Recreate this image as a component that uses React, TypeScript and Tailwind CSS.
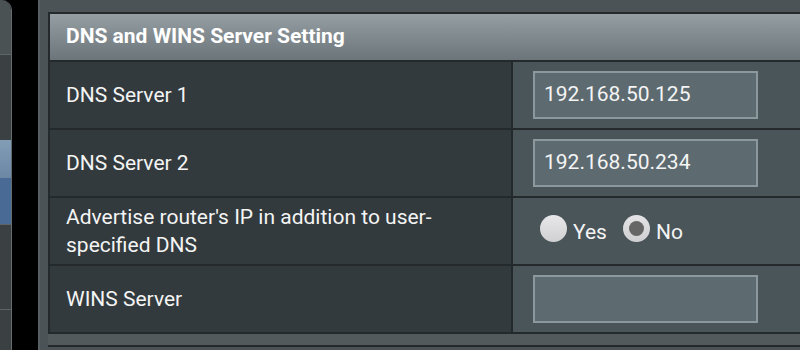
import React from "react";

const font = { fontFamily: "Roboto, 'Liberation Sans', sans-serif" };

function Row({ label, children }: { label: React.ReactNode; children: React.ReactNode }) {
  return (
    <div className="flex h-[68px] border-b-2 border-[#24292b]">
      <div className="w-[463px] bg-[#323a3d] border-r-2 border-[#24292b] flex items-center pl-[16px] text-[21px] leading-[28px] text-[#f4f4f4]">
        {label}
      </div>
      <div className="flex-1 bg-[#4a555a] flex items-center pl-[20px]">{children}</div>
    </div>
  );
}

function Input({ value }: { value: string }) {
  return (
    <div className="w-[225px] h-[48px] bg-[#5d6b71] border-2 border-[#8b999e] flex items-center pl-[9px] text-[21px] text-[#f4f4f4]">
      {value}
    </div>
  );
}

export default function App() {
  return (
    <div className="w-[800px] h-[350px] bg-black flex overflow-hidden" style={font}>
      <div className="w-[12px] h-full flex flex-col rounded-tr-[10px] overflow-hidden border-r border-[#656c6e]">
        <div className="h-[55px] bg-[#4b5254] border-b border-[#5e6567]" />
        <div className="h-[85px] bg-[#3b4042]" />
        <div className="h-[38px] bg-gradient-to-b from-[#829db6] to-[#6b87a4]" />
        <div className="h-[47px] bg-[#4a6a96] border-b border-[#5e6567]" />
        <div className="h-[85px] bg-[#3b4042] border-b border-[#5e6567]" />
        <div className="flex-1 bg-[#3b4042]" />
      </div>
      <div className="w-[26px] h-full bg-black" />
      <div className="flex-1 h-full bg-[#4b5356] border-l-2 border-[#575f62] pl-[8px] pt-[12px]">
        <div className="border-l-2 border-t-2 border-[#24292b]">
          <div className="h-[48px] bg-gradient-to-b from-[#959ea3] to-[#6c7579] border-b-2 border-[#24292b] flex items-center pl-[16px] text-[21px] font-bold text-white">
            DNS and WINS Server Setting
          </div>
          <Row label="DNS Server 1">
            <Input value="192.168.50.125" />
          </Row>
          <Row label="DNS Server 2">
            <Input value="192.168.50.234" />
          </Row>
          <Row
            label={
              <span>
                Advertise router's IP in addition to user-
                <br />
                specified DNS
              </span>
            }
          >
            <div className="flex items-center text-[21px] text-[#f4f4f4] pt-[4px] ml-[7px]">
              <div className="w-[27px] h-[27px] rounded-full bg-gradient-to-b from-[#e8e8ea] to-[#d0d0d2] -mt-[10px]" />
              <span className="ml-[6px]">Yes</span>
              <div className="ml-[16px] w-[27px] h-[27px] rounded-full bg-gradient-to-b from-[#e4e4e6] to-[#cfcfd1] flex items-center justify-center -mt-[10px]">
                <div className="w-[15px] h-[15px] rounded-full bg-[#666]" />
              </div>
              <span className="ml-[6px]">No</span>
            </div>
          </Row>
          <Row label="WINS Server">
            <Input value="" />
          </Row>
        </div>
        <div className="h-[13px] bg-[#525a5c] border-b-2 border-[#24292b]" />
      </div>
    </div>
  );
}
